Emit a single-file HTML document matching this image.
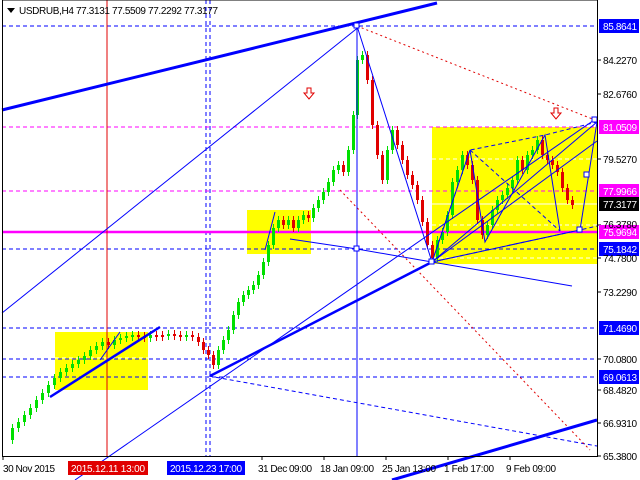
<!DOCTYPE html>
<html><head><style>
body{margin:0;background:#fff;width:640px;height:480px;overflow:hidden;font-family:"Liberation Sans",sans-serif}
svg{position:absolute;left:0;top:0}
.t{font-size:10px;fill:#000}
</style></head><body>
<svg width="640" height="480" viewBox="0 0 640 480" xmlns="http://www.w3.org/2000/svg">
<rect x="0" y="0" width="640" height="480" fill="#fff"/>
<rect x="432" y="127" width="165" height="137" fill="#ffff00"/>
<rect x="247" y="210" width="64" height="44" fill="#ffff00"/>
<rect x="55" y="332" width="93" height="58" fill="#ffff00"/>
<g stroke="#fff" stroke-dasharray="4,3" stroke-width="1">
<line x1="432" y1="159" x2="597" y2="159"/><line x1="432" y1="225" x2="597" y2="225"/><line x1="432" y1="258" x2="597" y2="258"/>
<line x1="55" y1="358" x2="148" y2="358"/>
</g>
<line x1="432" y1="204" x2="597" y2="204" stroke="#fff"/>
<g stroke="#0000ff" stroke-dasharray="4,3" stroke-width="1">
<line x1="2" y1="26" x2="597" y2="26"/><line x1="2" y1="249" x2="597" y2="249"/>
<line x1="2" y1="328" x2="597" y2="328"/><line x1="2" y1="359" x2="597" y2="359"/><line x1="2" y1="377" x2="597" y2="377"/>
<line x1="206" y1="0" x2="206" y2="456"/><line x1="210" y1="0" x2="210" y2="456"/>
<line x1="209" y1="376" x2="597" y2="446"/>
</g>
<g stroke="#ff00ff" stroke-dasharray="4,3"><line x1="2" y1="127" x2="597" y2="127"/><line x1="2" y1="191" x2="597" y2="191"/></g>
<line x1="2" y1="232" x2="597" y2="232" stroke="#ff00ff" stroke-width="2.5"/>
<line x1="107" y1="0" x2="107" y2="456" stroke="#e00000" stroke-width="1"/>
<g stroke="#e00000" stroke-dasharray="2,3"><line x1="357" y1="26" x2="595" y2="120"/><line x1="340" y1="190" x2="590" y2="450"/></g>
<g id="candles"></g>
<g stroke="#0000ff" fill="none">
<line x1="2" y1="110" x2="437" y2="3" stroke-width="3"/>
<line x1="50" y1="397" x2="160" y2="327" stroke-width="2.5"/>
<line x1="210" y1="376" x2="432" y2="262" stroke-width="2.5"/>
<line x1="392" y1="480" x2="597" y2="420" stroke-width="3"/>
<line x1="2" y1="313" x2="360" y2="26"/>
<line x1="75" y1="480" x2="597" y2="118"/>
<line x1="357" y1="26" x2="357" y2="456"/>
<polyline points="357,26 432,262 470,150 485,242 545,135 560,231"/>
<polyline points="290,239 357,249 432,262 572,286"/>
<polyline points="432,262 597,122 580,230 432,262"/>
<polyline points="432,262 597,141"/>
<polyline points="265,250 275,212"/><polyline points="100,360 120,332"/>
<polyline stroke-dasharray="4,3" points="432,262 470,150 545,135 597,122"/>
<polyline stroke-dasharray="4,3" points="432,262 580,230 597,226"/>
<polyline stroke-dasharray="4,3" points="470,150 560,231"/>
</g>
<g fill="#fff" stroke="#0000ff"><rect x="354" y="23" width="5" height="5"/><rect x="354" y="246" width="5" height="5"/><rect x="429" y="259" width="5" height="5"/><rect x="577" y="227" width="5" height="5"/><rect x="584" y="172" width="5" height="5"/><rect x="592" y="117" width="5" height="5"/></g>
<g fill="#fff" stroke="#e00000"><path d="M307,88h4v5h3l-5,6l-5,-6h3z"/><path d="M554,108h4v5h3l-5,6l-5,-6h3z"/></g>
<rect x="2.5" y="0" width="595" height="456.5" fill="none" stroke="#000"/>
<g stroke="#000"><line x1="597" y1="60" x2="601" y2="60"/><line x1="597" y1="94" x2="601" y2="94"/><line x1="597" y1="159" x2="601" y2="159"/><line x1="597" y1="225" x2="601" y2="225"/><line x1="597" y1="258" x2="601" y2="258"/><line x1="597" y1="292" x2="601" y2="292"/><line x1="597" y1="359" x2="601" y2="359"/><line x1="597" y1="390" x2="601" y2="390"/><line x1="597" y1="423" x2="601" y2="423"/><line x1="597" y1="456" x2="601" y2="456"/></g>
<rect x="599" y="19" width="40" height="14" fill="#0000ff"/>
<rect x="599" y="120" width="40" height="14" fill="#ff00ff"/>
<rect x="599" y="184" width="40" height="14" fill="#ff00ff"/>
<rect x="599" y="197" width="40" height="14" fill="#000"/>
<rect x="599" y="225" width="40" height="14" fill="#ff00ff"/>
<rect x="599" y="242" width="40" height="14" fill="#0000ff"/>
<rect x="599" y="321" width="40" height="14" fill="#0000ff"/>
<rect x="599" y="370" width="40" height="14" fill="#0000ff"/>
<g class="t">
<text x="603" y="30" fill="#fff" textLength="34">85.8641</text>
<text x="603" y="64" textLength="34">84.2270</text>
<text x="603" y="98" textLength="34">82.6760</text>
<text x="603" y="131" fill="#fff" textLength="34">81.0509</text>
<text x="603" y="163" textLength="34">79.5270</text>
<text x="603" y="195" fill="#fff" textLength="34">77.9966</text>
<text x="603" y="208" fill="#fff" textLength="34">77.3177</text>
<text x="603" y="228" textLength="34">76.3780</text>
<text x="603" y="236" fill="#fff" textLength="34">75.9694</text>
<text x="603" y="253" fill="#fff" textLength="34">75.1842</text>
<text x="603" y="262" textLength="34">74.7800</text>
<text x="603" y="296" textLength="34">73.2290</text>
<text x="603" y="332" fill="#fff" textLength="34">71.4690</text>
<text x="603" y="363" textLength="34">70.0800</text>
<text x="603" y="381" fill="#fff" textLength="34">69.0613</text>
<text x="603" y="394" textLength="34">68.4820</text>
<text x="603" y="427" textLength="34">66.9310</text>
<text x="603" y="460" textLength="34">65.3800</text>
</g>
<g stroke="#000"><line x1="3" y1="456" x2="3" y2="460"/><line x1="262" y1="456" x2="262" y2="460"/><line x1="324" y1="456" x2="324" y2="460"/><line x1="386" y1="456" x2="386" y2="460"/><line x1="448" y1="456" x2="448" y2="460"/><line x1="510" y1="456" x2="510" y2="460"/></g>
<g class="t">
<text x="3" y="472" textLength="52">30 Nov 2015</text>
<text x="118" y="472">Dec 1</text>
<rect x="68" y="461" width="80" height="14" fill="#e00000"/>
<text x="71" y="472" fill="#fff" textLength="74">2015.12.11 13:00</text>
<rect x="167" y="461" width="78" height="14" fill="#0000ff"/>
<text x="170" y="472" fill="#fff" textLength="72">2015.12.23 17:00</text>
<text x="258" y="472" textLength="54">31 Dec 09:00</text>
<text x="320" y="472" textLength="54">18 Jan 09:00</text>
<text x="382" y="472" textLength="54">25 Jan 13:00</text>
<text x="444" y="472" textLength="50">1 Feb 17:00</text>
<text x="506" y="472" textLength="50">9 Feb 09:00</text>
<path d="M7,8h8l-4,5z" fill="#000"/>
<text x="19" y="14" textLength="199">USDRUB,H4  77.3131 77.5509 77.2292 77.3177</text>
</g>
</svg>
<script>
var p=[[5,440],[11,428],[17,422],[23,415],[29,408],[35,400],[41,393],[47,385],[53,378],[59,372],[65,368],[71,364],[77,360],[83,356],[89,350],[95,346],[101,342],[107,345],[113,340],[119,338],[125,336],[131,335],[137,336],[143,338],[149,335],[155,335],[161,336],[167,334],[173,335],[179,336],[185,335],[191,337],[197,342],[202,350],[207,355],[212,365],[217,350],[222,340],[227,330],[232,315],[237,302],[242,295],[247,290],[252,285],[257,275],[262,262],[267,245],[272,228],[277,220],[282,225],[287,220],[292,228],[297,220],[302,215],[307,218],[312,208],[317,200],[322,192],[327,182],[332,170],[337,165],[342,172],[347,150],[352,115],[356,60],[361,55],[366,80],[371,125],[376,155],[381,180],[386,150],[391,130],[396,145],[401,160],[406,175],[411,185],[416,200],[421,222],[426,245],[431,258],[436,240],[441,232],[446,215],[451,182],[456,170],[461,155],[466,165],[471,180],[476,220],[481,235],[486,225],[491,210],[496,200],[501,195],[506,188],[511,180],[516,160],[521,170],[526,155],[531,150],[536,140],[541,155],[546,160],[551,165],[556,172],[561,188],[566,200],[571,205]];
var s="";for(var i=1;i<p.length;i++){var o=p[i-1][1],c=p[i][1],x=p[i][0],up=c<o,col=up?"#00e000":"#e00000",t=Math.min(o,c),h=Math.max(2,Math.abs(c-o));s+='<line x1="'+(x+1.5)+'" y1="'+(t-4)+'" x2="'+(x+1.5)+'" y2="'+(t+h+4)+'" stroke="'+col+'"/><rect x="'+x+'" y="'+t+'" width="3" height="'+h+'" fill="'+col+'"/>';}
document.getElementById("candles").innerHTML=s;
</script>
</body></html>
